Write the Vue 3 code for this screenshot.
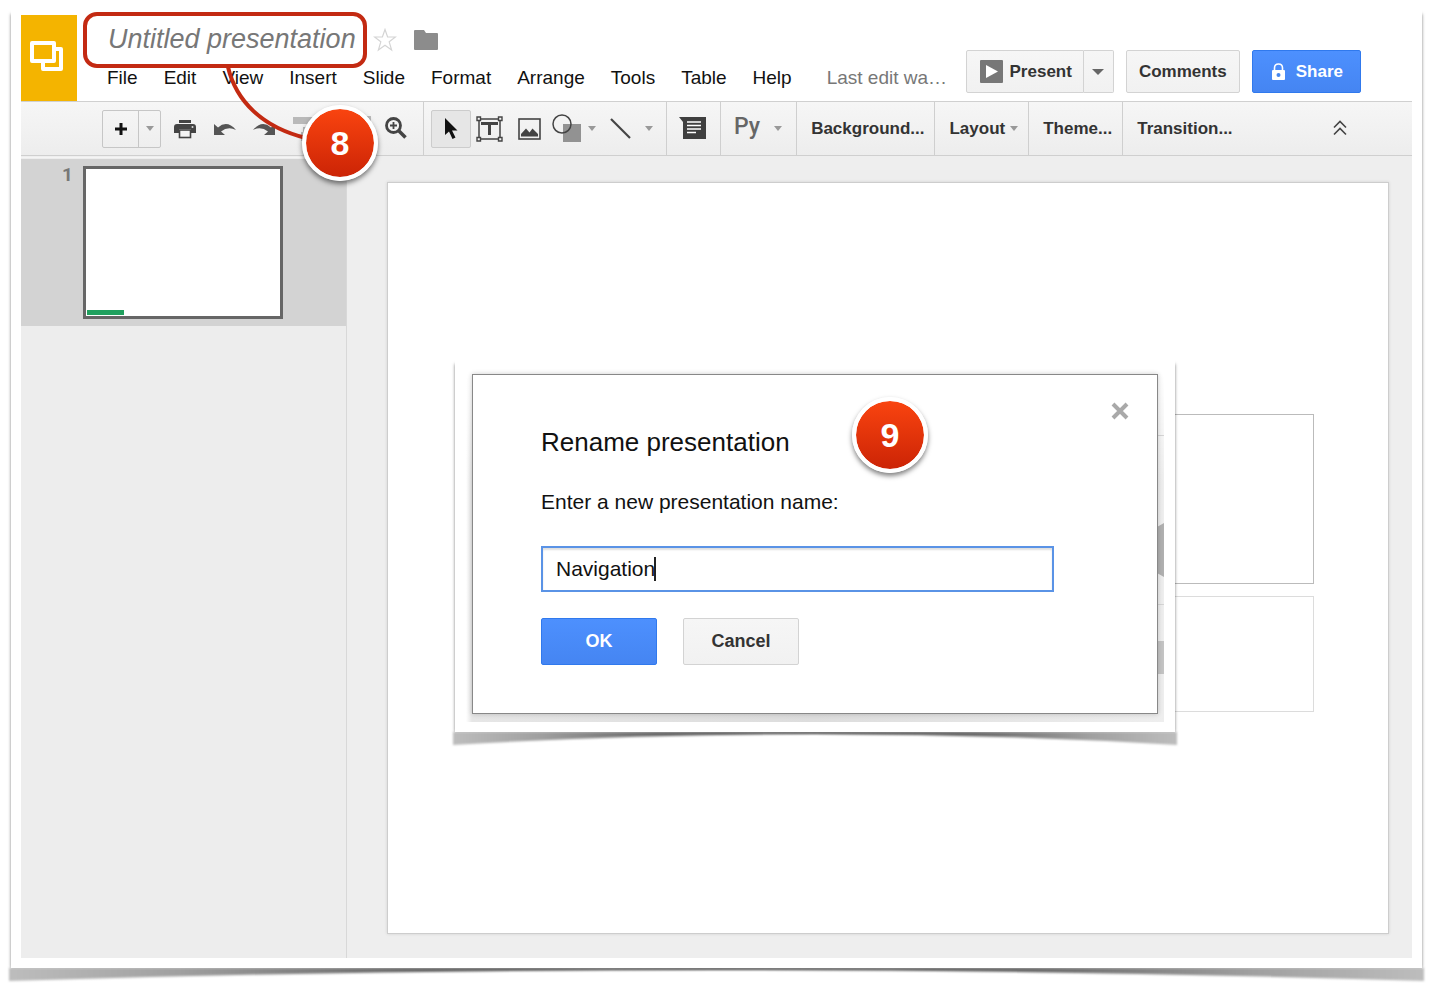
<script setup>
import { ref } from 'vue'

const menus = ['File', 'Edit', 'View', 'Insert', 'Slide', 'Format', 'Arrange', 'Tools', 'Table', 'Help']
const name = ref('Navigation')
</script>

<template>
  <div class="page">
    <div class="paper sheet">
      <svg class="curl" viewBox="0 0 1416 16" preserveAspectRatio="none" aria-hidden="true">
        <defs>
          <linearGradient id="curlTone" x1="0" x2="1" y1="0" y2="0">
            <stop offset="0" stop-color="#bdbdbd" />
            <stop offset=".12" stop-color="#a0a0a0" />
            <stop offset=".28" stop-color="#666" />
            <stop offset=".5" stop-color="#3c3c3c" />
            <stop offset=".72" stop-color="#666" />
            <stop offset=".88" stop-color="#a0a0a0" />
            <stop offset="1" stop-color="#bdbdbd" />
          </linearGradient>
        </defs>
        <path d="M0 0H1416V13Q708 -9 0 13Z" fill="url(#curlTone)" />
      </svg>

      <header class="header">
        <div class="logo">
          <svg width="34" height="32" viewBox="0 0 34 32" fill="none" stroke="#fff" stroke-width="4" stroke-linejoin="round">
            <path d="M26 10H31V30H13V24" />
            <rect x="2" y="4" width="22" height="18" />
          </svg>
        </div>
        <div class="head-main">
          <div class="title-row">
            <button class="doc-title">Untitled presentation</button>
            <button class="plain star" aria-label="Star">
              <svg width="24" height="24" viewBox="0 0 24 24" fill="#fff" stroke="#d4d4d4" stroke-width="1.2">
                <path d="M12 1.5L14.6 9H22.5L16.2 13.8L18.6 22L12 17.2L5.4 22L7.8 13.8L1.5 9H9.4Z" />
              </svg>
            </button>
            <button class="plain folder" aria-label="Move to folder">
              <svg width="24" height="20" viewBox="0 0 24 20"><path d="M0 1Q0 0 1 0H10L12 3H23Q24 3 24 4V19Q24 20 23 20H1Q0 20 0 19Z" fill="#8c8c8c" /></svg>
            </button>
          </div>
          <nav class="menus">
            <button v-for="m in menus" :key="m" class="plain">{{ m }}</button>
            <a class="last-edit" href="#">Last edit wa…</a>
          </nav>
        </div>
        <div class="actions">
          <div class="split">
            <button class="btn present">
              <svg width="23" height="23" viewBox="0 0 23 23"><rect width="23" height="23" rx="1" fill="#777" /><path d="M6 5L18 11.500L6 18Z" fill="#fff" /></svg>
              Present
            </button>
            <button class="btn more" aria-label="Present options"><i class="caret big"></i></button>
          </div>
          <button class="btn comments">Comments</button>
          <button class="btn blue share">
            <svg width="15" height="18" viewBox="0 0 15 18"><path d="M3.500 8V5Q3.500 1 7.500 1T11.500 5V8" fill="none" stroke="#fff" stroke-width="1.600" /><rect x="1" y="7" width="13" height="10" rx="1" fill="#fff" /><circle cx="7.500" cy="12" r="2" fill="#4787ed" /></svg>
            Share
          </button>
        </div>
      </header>

      <div class="toolbar">
        <div class="group first">
          <div class="new-slide">
            <button class="plain plus" aria-label="New slide"><svg width="14" height="14" viewBox="0 0 14 14"><path d="M7 1V13M1 7H13" stroke="#111" stroke-width="3" /></svg></button>
            <button class="plain drop" aria-label="New slide with layout"><i class="caret"></i></button>
          </div>
          <button class="plain" aria-label="Print">
            <svg width="22" height="20" viewBox="0 0 22 20"><path d="M5 1H17V4H5ZM3 5H19Q22 5 22 8V14H17V10H5V14H0V8Q0 5 3 5Z" fill="#444" /><rect x="5.500" y="11" width="11" height="7.500" fill="#f4f4f4" stroke="#444" stroke-width="1.600" /><circle cx="18.500" cy="8" r="1" fill="#ddd" /></svg>
          </button>
          <button class="plain" aria-label="Undo">
            <svg width="23" height="16" viewBox="0 0 23 16"><path d="M1 3V14H12L8 10.500Q15 5 23 9Q14 -1.500 5 6.500Z" fill="#555" /></svg>
          </button>
          <button class="plain" aria-label="Redo">
            <svg width="23" height="16" viewBox="0 0 23 16"><path d="M22 3V14H11L15 10.500Q8 5 0 9Q9 -1.500 18 6.500Z" fill="#555" /></svg>
          </button>
          <button class="plain" aria-label="Paint format">
            <svg width="26" height="26" viewBox="0 0 26 26"><path d="M0 1H20V8H0ZM20 3H25V13H12V17H10V11H23V5H20ZM8 16H14V25H8Z" fill="#b9b9b9" /></svg>
          </button>
          <button class="plain fit" aria-label="Zoom to fit">
            <svg width="26" height="26" viewBox="0 0 26 26" fill="none" stroke="#bbb" stroke-width="2"><path d="M1 7V1H7M19 1H25V7M25 19V25H19M7 25H1V19" /></svg>
          </button>
          <button class="plain zoom" aria-label="Zoom">
            <svg width="22" height="24" viewBox="0 0 22 24" fill="none" stroke="#444"><circle cx="8.500" cy="8.500" r="7" stroke-width="2.800" /><path d="M14 14L20.500 20.500" stroke-width="3.600" /><path d="M8.500 5V12M5 8.500H12" stroke-width="1.800" /></svg>
          </button>
        </div>

        <div class="group tools">
          <button class="pointer" aria-label="Select">
            <svg width="14" height="24" viewBox="0 0 14 24"><path d="M1 1V18L5 14.500L8.500 22L11.500 20.500L8 13.500H13.500Z" fill="#111" /></svg>
          </button>
          <button class="plain textbox" aria-label="Text box">
            <svg width="27" height="26" viewBox="0 0 27 26" fill="none" stroke="#444"><path d="M3 3H24V23H3Z" stroke-width="1.500" /><path d="M6.500 9V7.500H20.500V9M13.500 7V19" stroke-width="3" /><g fill="#f4f4f4" stroke-width="1.400"><path d="M1 1H4.500V4.500H1ZM22.500 1H26V4.500H22.500ZM1 21.500H4.500V25H1ZM22.500 21.500H26V25H22.500Z" /></g></svg>
          </button>
          <button class="plain image" aria-label="Image">
            <svg width="23" height="22" viewBox="0 0 23 22"><rect x="1" y="1" width="21" height="20" fill="none" stroke="#444" stroke-width="1.600" /><path d="M3 18.500V16L8 10.500L11.500 14.500L14.500 10.500L20 16V18.500Z" fill="#444" /></svg>
          </button>
          <button class="plain shape" aria-label="Shape">
            <svg width="29" height="30" viewBox="0 0 29 30"><rect x="11" y="10" width="18" height="18" fill="#929292" /><circle cx="10" cy="10" r="9" fill="none" stroke="#444" stroke-width="1.500" /></svg>
            <i class="caret"></i>
          </button>
          <button class="plain line" aria-label="Line">
            <svg width="21" height="22" viewBox="0 0 21 22"><path d="M1 1L20 20" stroke="#444" stroke-width="2.200" /></svg>
            <i class="caret"></i>
          </button>
        </div>

        <div class="group comment">
          <button class="plain" aria-label="Insert comment">
            <svg width="27" height="22" viewBox="0 0 27 22"><path d="M0 0H27V22H4V5Z" fill="#3f3f3f" /><path d="M8 5H22M8 8.500H22M8 12H22M8 15.500H17" stroke="#fff" stroke-width="1.500" /></svg>
          </button>
        </div>
        <div class="group input-tools"><button class="plain py"><span>Py</span><i class="caret"></i></button></div>
        <div class="group word"><button class="plain">Background...</button></div>
        <div class="group word"><button class="plain layout">Layout<i class="caret"></i></button></div>
        <div class="group word"><button class="plain">Theme...</button></div>
        <button class="plain transition">Transition...</button>
        <button class="plain collapse" aria-label="Hide menus">
          <svg width="14" height="18" viewBox="0 0 14 18" fill="none" stroke="#444" stroke-width="1.600"><path d="M1 7.500L7 1.500L13 7.500M1 14.500L7 8.500L13 14.500" /></svg>
        </button>
      </div>

      <div class="work">
        <aside class="film">
          <div class="film-row">
            <span class="num">1</span>
            <div class="thumb"><div class="progress"></div></div>
          </div>
        </aside>
        <main class="stage">
          <div class="slide">
            <div class="holder head"></div>
            <div class="holder sub"></div>
          </div>
        </main>
      </div>

      <svg class="link" width="84" height="76" viewBox="0 0 84 76" fill="none" aria-hidden="true">
        <path d="M4 1C12 35 38 61 82 72" stroke="#c32a12" stroke-width="4" />
      </svg>
      <span class="badge eight">8</span>

      <div class="paper pop">
        <svg class="curl" viewBox="0 0 1416 16" preserveAspectRatio="none" aria-hidden="true">
          <path d="M0 0H1416V13Q708 -9 0 13Z" fill="url(#curlTone)" />
        </svg>
        <div class="backdrop">
          <i class="rule"></i><i class="bar"></i><i class="rule"></i><i class="bar small"></i>
        </div>
        <section class="dialog" role="dialog" aria-labelledby="dlg-title">
          <button class="plain close" aria-label="Close">
            <svg width="18" height="18" viewBox="0 0 18 18"><path d="M2 2L16 16M16 2L2 16" stroke="#a9a9a9" stroke-width="4" /></svg>
          </button>
          <h2 id="dlg-title">Rename presentation</h2>
          <label for="dlg-name">Enter a new presentation name:</label>
          <div class="field">
            <input id="dlg-name" v-model="name" type="text" />
            <i class="cursor"></i>
          </div>
          <div class="choices">
            <button class="btn blue">OK</button>
            <button class="btn">Cancel</button>
          </div>
        </section>
        <span class="badge nine">9</span>
      </div>
    </div>
  </div>
</template>

<style>
body {
  margin: 0;
  background: #fff;
}
</style>

<style scoped>
.page,
.page * {
  box-sizing: border-box;
}
.page {
  display: flex;
  min-height: 100vh;
  padding: 8px 14px 22px 11px;
  font-family: "Liberation Sans", Arial, sans-serif;
  color: #111;
}
button,
input {
  font-family: inherit;
}
svg {
  display: block;
  flex: none;
}
.paper {
  position: relative;
  isolation: isolate;
}
.paper::before {
  content: "";
  position: absolute;
  inset: 6px 0 0;
  z-index: -2;
  box-shadow: 0 0 3px rgba(0, 0, 0, 0.5);
}
.paper::after {
  content: "";
  position: absolute;
  inset: 0;
  z-index: -1;
  background: #fff;
}
.curl {
  position: absolute;
  top: 100%;
  left: -2px;
  width: calc(100% + 4px);
  height: 16px;
  filter: blur(1px);
  z-index: -2;
}
.sheet {
  display: flex;
  flex-direction: column;
  flex: 1;
  min-width: 0;
  padding: 4px 10px 10px;
}

.plain {
  display: flex;
  align-items: center;
  padding: 0;
  border: 0;
  background: none;
  color: inherit;
  white-space: nowrap;
}
.caret {
  flex: none;
  border: 4px solid transparent;
  border-top: 5px solid #999;
  border-bottom: 0;
}
.caret.big {
  border-width: 6px 6px 0;
  border-top-color: #666;
}

.header {
  display: flex;
  height: 89px;
}
.logo {
  width: 56px;
  margin-top: 3px;
  padding: 24px 0 0 9px;
  background: #f4b400;
}
.head-main {
  padding-left: 6px;
}
.title-row {
  display: flex;
  align-items: center;
}
.doc-title {
  height: 56px;
  padding: 0 7px 2px 21px;
  border: 4px solid #c32a12;
  border-radius: 14px;
  background: #fff;
  color: #777;
  font-size: 27px;
  font-style: italic;
  white-space: nowrap;
}
.star {
  margin-left: 6px;
}
.folder {
  margin-left: 17px;
}
.menus {
  display: flex;
  gap: 26px;
  padding-left: 24px;
  font-size: 19px;
  line-height: 20px;
}
.menus .plain {
  font-size: 19px;
  line-height: 20px;
}
.last-edit {
  margin-left: 9px;
  color: #777;
  text-decoration: none;
  white-space: nowrap;
}
.actions {
  display: flex;
  align-items: flex-start;
  gap: 12px;
  margin-left: auto;
  padding: 38px 51px 0 0;
}
.split {
  display: flex;
}
.btn {
  display: flex;
  align-items: center;
  justify-content: center;
  height: 43px;
  padding: 0 12px;
  border: 1px solid #d3d3d3;
  border-radius: 2px;
  background: linear-gradient(#f6f6f6, #f1f1f1);
  color: #333;
  font-size: 17px;
  font-weight: bold;
  white-space: nowrap;
}
.blue {
  border-color: #3079ed;
  background: linear-gradient(#4d90fe, #4585f2);
  color: #fff;
}
.present {
  gap: 7px;
  padding: 0 11px 0 13px;
  border-radius: 2px 0 0 2px;
}
.more {
  width: 30px;
  padding: 0;
  border-left: 0;
  border-radius: 0 2px 2px 0;
}
.share {
  gap: 10px;
  padding: 0 17px 0 18px;
}

.toolbar {
  display: flex;
  height: 55px;
  border-top: 1px solid #d0d0d0;
  border-bottom: 1px solid #cfcfcf;
  background: linear-gradient(#f6f6f6, #ededed);
  color: #333;
}
.group {
  display: flex;
  align-items: center;
  border-right: 1px solid #cfcfcf;
}
.toolbar .plain {
  font-size: 17px;
  font-weight: bold;
}
.first {
  gap: 17px;
  padding: 0 16px 0 81px;
}
.new-slide {
  display: flex;
  height: 38px;
  margin-right: -4px;
  border: 1px solid #c6c6c6;
  border-radius: 2px;
}
.plus {
  width: 36px;
  justify-content: center;
  border-right: 1px solid #c6c6c6;
}
.drop {
  width: 21px;
  justify-content: center;
}
.fit {
  margin-left: 9px;
}
.zoom {
  margin-left: -3px;
}
.tools {
  padding: 0 13px 0 7px;
}
.pointer {
  display: flex;
  align-items: center;
  justify-content: center;
  width: 40px;
  height: 38px;
  padding: 0;
  border: 1px solid #ccc;
  border-radius: 2px;
  background: #e6e6e6;
}
.textbox {
  margin-left: 5px;
}
.image {
  margin-left: 15px;
}
.shape {
  gap: 7px;
  margin-left: 11px;
}
.line {
  gap: 14px;
  margin-left: 14px;
}
.comment {
  padding: 0 14px 2px 12px;
}
.input-tools {
  padding: 0 14px 0 13px;
}
.py {
  gap: 14px;
}
.py span {
  padding-bottom: 4px;
  color: #666;
  font-family: Roboto, sans-serif;
  font-size: 23px;
  font-weight: 500;
}
.word {
  padding: 0 10px 0 14px;
}
.layout {
  gap: 5px;
}
.transition {
  margin-left: 14px;
}
.collapse {
  margin: 0 65px 0 auto;
}

.work {
  display: flex;
  flex: 1;
  padding-top: 1px;
  background: #eee;
}
.film {
  width: 326px;
  padding-top: 1px;
  border-right: 1px solid #d8d8d8;
  border-top: 1px solid #f4f4f4;
  background: #ededed;
}
.film-row {
  display: flex;
  gap: 11px;
  height: 167px;
  padding: 7px 0 0 41px;
  background: #d3d3d3;
}
.num {
  width: 10px;
  color: #777;
  font-family: Roboto, sans-serif;
  font-size: 19px;
  font-weight: bold;
  line-height: 18px;
}
.thumb {
  display: flex;
  align-items: flex-end;
  width: 200px;
  height: 153px;
  padding: 1px;
  border: 3px solid #666;
  background: #fff;
}
.progress {
  width: 37px;
  height: 5px;
  background: #20a05e;
}
.stage {
  display: flex;
  flex: 1;
  padding: 25px 23px 24px 40px;
}
.slide {
  display: flex;
  flex-direction: column;
  flex: 1;
  gap: 12px;
  padding: 231px 74px 0;
  border: 1px solid #cdcdcd;
  background: #fff;
  box-shadow: 0 0 3px rgba(0, 0, 0, 0.12);
}
.holder {
  border: 1px solid #bbb;
}
.head {
  height: 170px;
}
.sub {
  height: 116px;
  border-color: #dcdcdc;
}

.link {
  position: absolute;
  left: 213px;
  top: 58px;
}
.badge {
  position: absolute;
  display: flex;
  align-items: center;
  justify-content: center;
  width: 76px;
  height: 76px;
  border: 4px solid #fff;
  border-radius: 50%;
  background: linear-gradient(#fc4610, #c92205) border-box;
  background-clip: padding-box;
  box-shadow: 0 3px 5px rgba(0, 0, 0, 0.5);
  color: #fff;
  font-size: 34px;
  font-weight: bold;
  line-height: 1;
}
.eight {
  left: 291px;
  top: 97px;
}
.nine {
  left: 397px;
  top: 39px;
}

.pop {
  position: absolute;
  left: 444px;
  top: 350px;
  width: 720px;
  padding: 16px 17px 18px;
}
.backdrop {
  position: absolute;
  top: 16px;
  right: 11px;
  bottom: 10px;
  left: 11px;
  padding-top: 61px;
  background:
    linear-gradient(#fff, transparent 110px),
    linear-gradient(90deg, #fff, #e6e6e6 6px, #ddd 50%, #eee);
}
.rule,
.bar {
  display: block;
  width: 7px;
  height: 1px;
  margin-left: auto;
  background: #d5d5d5;
}
.bar {
  height: 54px;
  margin-top: 87px;
  margin-bottom: 27px;
  background: #b0b0b0;
  clip-path: polygon(0 4px, 100% 0, 100% 100%, 0 50px);
}
.bar.small {
  width: 6px;
  height: 33px;
  margin-top: 36px;
  background: #c4c4c4;
  clip-path: none;
}
.dialog {
  position: relative;
  padding: 52px 103px 48px 68px;
  border: 1px solid #888;
  background: #fff;
  box-shadow: 0 0 5px rgba(0, 0, 0, 0.2);
}
.close {
  position: absolute;
  top: 27px;
  right: 28px;
}
h2 {
  margin: 0 0 33px;
  font-size: 26px;
  font-weight: normal;
  line-height: 30px;
}
label {
  display: block;
  margin-bottom: 32px;
  font-size: 21px;
  line-height: 24px;
}
.field {
  position: relative;
}
.field input {
  display: block;
  width: 100%;
  height: 46px;
  padding: 0 13px;
  border: 2px solid #5a93e6;
  border-radius: 0;
  outline: 0;
  background: #fff;
  box-shadow: inset 0 2px 2px rgba(0, 0, 0, 0.13);
  color: #111;
  font-size: 21px;
}
.cursor {
  position: absolute;
  left: 113px;
  top: 11px;
  width: 2px;
  height: 24px;
  background: #222;
}
.choices {
  display: flex;
  gap: 26px;
  margin-top: 26px;
}
.choices .btn {
  width: 116px;
  height: 47px;
  font-size: 18px;
}
</style>
